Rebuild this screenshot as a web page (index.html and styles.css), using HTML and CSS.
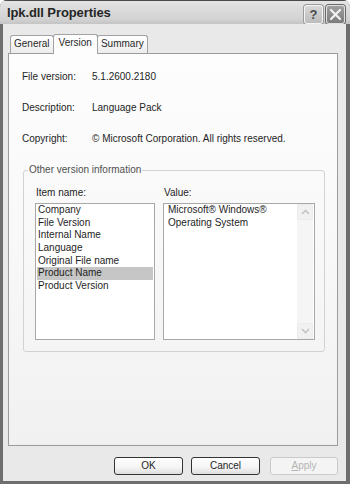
FILE: index.html
```html
<!DOCTYPE html>
<html>
<head>
<meta charset="utf-8">
<link rel="stylesheet" href="styles.css">
</head>
<body>
<div class="window">
  <div class="titlebar">
    <span class="title">lpk.dll Properties</span>
    <div class="caption-btns">
      <span class="cbtn help">?</span>
      <span class="cbtn close"><svg width="13" height="13" viewBox="0 0 13 13"><path d="M2 2 L11 11 M11 2 L2 11" stroke="#f2f2f2" stroke-width="2.2" stroke-linecap="round"/></svg></span>
    </div>
  </div>
  <div class="frame">
    <div class="tabs">
      <div class="tab">General</div>
      <div class="tab active">Version</div>
      <div class="tab">Summary</div>
    </div>
    <div class="panel">
      <div class="row"><span class="lbl">File version:</span><span>5.1.2600.2180</span></div>
      <div class="row"><span class="lbl">Description:</span><span>Language Pack</span></div>
      <div class="row"><span class="lbl">Copyright:</span><span>© Microsoft Corporation. All rights reserved.</span></div>
      <fieldset class="group">
        <legend>Other version information</legend>
        <div class="cols">
          <div class="col names">
            <div class="collabel">Item name:</div>
            <div class="listbox">
              <div class="item">Company</div>
              <div class="item">File Version</div>
              <div class="item">Internal Name</div>
              <div class="item">Language</div>
              <div class="item">Original File name</div>
              <div class="item selected">Product Name</div>
              <div class="item">Product Version</div>
            </div>
          </div>
          <div class="col values">
            <div class="collabel">Value:</div>
            <div class="valuebox">
              <div class="valtext">Microsoft® Windows®<br>Operating System</div>
              <div class="scrollbar">
                <div class="sbtn"><svg width="9" height="6" viewBox="0 0 9 6"><path d="M1 5 L4.5 1.5 L8 5" fill="none" stroke="#c4c4c4" stroke-width="1.6"/></svg></div>
                <div class="strack"></div>
                <div class="sbtn"><svg width="9" height="6" viewBox="0 0 9 6"><path d="M1 1 L4.5 4.5 L8 1" fill="none" stroke="#c4c4c4" stroke-width="1.6"/></svg></div>
              </div>
            </div>
          </div>
        </div>
      </fieldset>
    </div>
    <div class="buttons">
      <div class="btn ok">OK</div>
      <div class="btn cancel">Cancel</div>
      <div class="btn apply disabled"><u>A</u>pply</div>
    </div>
  </div>
</div>
</body>
</html>
```

FILE: styles.css
```css
html, body {
  margin: 0;
  padding: 0;
  background: #ffffff;
}

body {
  font-family: "Liberation Sans", Arial, sans-serif;
  font-size: 10px;
  color: #1e1e1e;
}

.window {
  width: 350px;
  height: 484px;
  display: flex;
  flex-direction: column;
  background: #6e6e6e;
  border-radius: 7px 7px 0 0;
  overflow: hidden;
}

.titlebar {
  flex: none;
  height: 24px;
  box-sizing: border-box;
  border-top: 1px solid #4a4a4a;
  background: linear-gradient(#e4e4e4, #dadada 40%, #d2d2d2 80%, #c4c4c4);
  display: flex;
  align-items: center;
  justify-content: space-between;
  padding: 0 5px 0 7px;
}

.title {
  font-size: 13px;
  font-weight: bold;
  color: #262626;
  letter-spacing: -0.1px;
}

.caption-btns {
  display: flex;
  gap: 3px;
  align-self: flex-end;
  margin-bottom: 0;
}

.cbtn {
  width: 19px;
  height: 19px;
  box-sizing: border-box;
  border-radius: 3px;
  display: flex;
  align-items: center;
  justify-content: center;
}

.help {
  background: linear-gradient(#d8d8d8, #bcbcbc);
  border: 1px solid #f4f4f4;
  box-shadow: 0 0 0 1px #9a9a9a;
  font-size: 13px;
  font-weight: bold;
  color: #4a4a4a;
}

.close {
  background: linear-gradient(#a0a0a0, #7c7c7c);
  border: 1px solid #e0e0e0;
  box-shadow: 0 0 0 1px #6a6a6a;
}

.frame {
  flex: 1;
  margin: 0 4px 3px 3px;
  background: #e9e9e9;
  padding: 10px 8px 0 5px;
  display: flex;
  flex-direction: column;
}

.tabs {
  display: flex;
  align-items: flex-end;
  height: 20px;
  padding-left: 2px;
  margin-bottom: -1px;
  position: relative;
  z-index: 1;
}

.tab {
  height: 17px;
  line-height: 16px;
  margin-bottom: 1px;
  padding: 0 3px;
  border: 1px solid #a2a2a2;
  border-bottom: none;
  border-radius: 3px 3px 0 0;
  background: linear-gradient(#ffffff, #ececec);
  color: #2a2a2a;
}

.tab.active {
  height: 19px;
  margin: 0 -1px 0 -1px;
  padding: 0 5px;
  background: #fdfdfd;
  position: relative;
  z-index: 2;
  line-height: 15px;
}

.panel {
  flex: none;
  height: 393px;
  box-sizing: border-box;
  border: 1px solid #9c9c9c;
  background: linear-gradient(#fdfdfd, #f8f8f8 50%, #f1f1f1);
  padding: 17px 12px 0 13px;
}

.row {
  display: flex;
  line-height: 12px;
  margin-bottom: 19px;
}

.lbl {
  width: 70px;
  flex: none;
}

.group {
  margin: 0 0 0 1px;
  padding: 11px 9px 11px 11px;
  border: 1px solid #d2d2d2;
  border-radius: 3px;
}

.group legend {
  padding: 0 1px;
  margin-left: -7px;
  line-height: 12px;
  color: #505050;
}

.cols {
  display: flex;
  gap: 8px;
}

.collabel {
  line-height: 12px;
  margin-bottom: 4px;
  padding-left: 1px;
}

.listbox {
  width: 120px;
  height: 137px;
  box-sizing: border-box;
  border: 1px solid #a8a8a8;
  background: #ffffff;
  padding: 0 1px;
}

.item {
  line-height: 12.67px;
  padding-left: 1px;
}

.item.selected {
  background: #c6c6c6;
}

.valuebox {
  width: 152px;
  height: 137px;
  box-sizing: border-box;
  border: 1px solid #a8a8a8;
  background: #ffffff;
  display: flex;
}

.valtext {
  flex: 1;
  padding: 0 4px;
  line-height: 12.67px;
}

.scrollbar {
  width: 16px;
  margin-right: 1px;
  display: flex;
  flex-direction: column;
  background: #f5f5f5;
}

.sbtn {
  height: 16px;
  box-sizing: border-box;
  border: 1px solid #ececec;
  border-radius: 2px;
  background: #f1f1f1;
  display: flex;
  align-items: center;
  justify-content: center;
}

.strack {
  flex: 1;
}

.buttons {
  display: flex;
  justify-content: flex-end;
  margin-top: 11px;
}

.btn {
  width: 69px;
  height: 18px;
  box-sizing: border-box;
  border: 1px solid #333333;
  border-radius: 3px;
  background: linear-gradient(#ffffff, #f4f4f4 60%, #dedede);
  text-align: center;
  line-height: 16px;
  color: #1e1e1e;
}

.btn.cancel {
  margin-left: 8px;
}

.btn.apply {
  width: 68px;
  margin-left: 10px;
}

.btn.disabled {
  border-color: #cacaca;
  background: #f4f4f4;
  color: #b4b4b4;
}
```
